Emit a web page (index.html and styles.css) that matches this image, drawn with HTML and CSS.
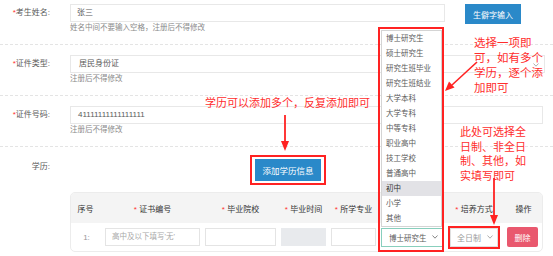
FILE: index.html
```html
<!DOCTYPE html>
<html lang="zh-CN">
<head>
<meta charset="utf-8">
<title>考生信息</title>
<link rel="stylesheet" href="styles.css">
</head>
<body>
<div class="page">
  <div class="row row-first">
    <div class="label"><span class="req">*</span>考生姓名:</div>
    <div class="field">
      <div class="input w-name">张三</div>
      <div class="hint">姓名中间不要输入空格，注册后不得修改</div>
    </div>
    <button class="btn btn-rare">生僻字输入</button>
  </div>
  <div class="sep"></div>
  <div class="row">
    <div class="label"><span class="req">*</span>证件类型:</div>
    <div class="field">
      <div class="input select w-type"><span class="pad2">居民身份证</span>
        <svg class="chev" width="6" height="4" viewBox="0 0 6 4"><polyline points="0.5,0.5 3,3.2 5.5,0.5" fill="none" stroke="#999" stroke-width="0.8"/></svg>
      </div>
      <div class="hint">注册后不得修改</div>
    </div>
  </div>
  <div class="sep"></div>
  <div class="row">
    <div class="label"><span class="req">*</span>证件号码:</div>
    <div class="field">
      <div class="input w-id"><span class="pad1">41111111111111111</span></div>
      <div class="hint">注册后不得修改</div>
    </div>
  </div>
  <div class="sep"></div>
  <div class="row row-edu">
    <div class="label label-edu">学历:</div>
    <div class="edu-body">
      <div class="add-wrap"><button class="btn btn-add">添加学历信息</button></div>
      <div class="table">
        <div class="thead">
          <div>序号</div>
          <div><span class="req">*</span> 证书编号</div>
          <div><span class="req">*</span> 毕业院校</div>
          <div><span class="req">*</span> 毕业时间</div>
          <div><span class="req">*</span> 所学专业</div>
          <div><span class="req">*</span> 学历</div>
          <div><span class="req">*</span> 培养方式</div>
          <div>操作</div>
        </div>
        <div class="trow">
          <div class="idx">1:</div>
          <div class="cell-input placeholder">高中及以下填写'无'</div>
          <div class="cell-input"></div>
          <div class="cell-input grey"></div>
          <div class="cell-input"></div>
          <div class="cell-select teal"><span>博士研究生</span>
            <svg width="6" height="4" viewBox="0 0 6 4"><polyline points="0.5,0.5 3,3.2 5.5,0.5" fill="none" stroke="#666" stroke-width="0.8"/></svg>
          </div>
          <div class="anno-box"><div class="cell-select muted"><span>全日制</span>
            <svg width="6" height="4" viewBox="0 0 6 4"><polyline points="0.5,0.5 3,3.2 5.5,0.5" fill="none" stroke="#999" stroke-width="0.8"/></svg>
          </div></div>
          <div class="op"><button class="btn btn-del">删除</button></div>
        </div>
      </div>
    </div>
  </div>
</div>

<div class="dd-frame"></div>
<ul class="dropdown">
  <li>博士研究生</li>
  <li>硕士研究生</li>
  <li>研究生班毕业</li>
  <li>研究生班结业</li>
  <li>大学本科</li>
  <li>大学专科</li>
  <li>中等专科</li>
  <li>职业高中</li>
  <li>技工学校</li>
  <li>普通高中</li>
  <li class="active">初中</li>
  <li>小学</li>
  <li>其他</li>
</ul>

<div class="note note-1">选择一项即<br>可，如有多个<br>学历，逐个添<br>加即可</div>
<div class="note note-2">学历可以添加多个，反复添加即可</div>
<div class="note note-3">此处可选择全<br>日制、非全日<br>制、其他，如<br>实填写即可</div>

<svg class="arrows" width="553" height="256" viewBox="0 0 553 256">
  <path d="M477,62 L452,85" stroke="#f22" stroke-width="1.6" fill="none"/>
  <polygon points="445,91 454.5,87.5 449,81.5" fill="#f22"/>
  <path d="M285,115 L285,143" stroke="#f22" stroke-width="1.8" fill="none"/>
  <polygon points="281,141 289,141 285,151" fill="#f22"/>
  <path d="M494,178 L494,217" stroke="#f22" stroke-width="1.8" fill="none"/>
  <polygon points="490,215 498,215 494,225" fill="#f22"/>
</svg>
</body>
</html>
```

FILE: styles.css
```css
* { box-sizing: border-box; }

body {
  margin: 0;
  width: 553px;
  height: 256px;
  overflow: hidden;
  position: relative;
  background: #fff;
  font-family: "Liberation Sans", "Noto Sans CJK SC", sans-serif;
  font-size: 8px;
  color: #5a5a5a;
}

.page { position: relative; }

.row {
  display: flex;
  align-items: flex-start;
  padding: 10px 0;
}

.row-first { padding-top: 4px; }

.label {
  width: 50px;
  margin-right: 20px;
  height: 18px;
  line-height: 18px;
  text-align: right;
  white-space: nowrap;
  color: #5a5a5a;
}

.req { color: #f33; }

.field { display: flex; flex-direction: column; }

.input {
  height: 18px;
  border: 1px solid #e8e8e8;
  line-height: 16px;
  padding-left: 6px;
  color: #5a5a5a;
  position: relative;
}

.w-name { width: 375px; }
.w-type { width: 475px; }
.w-id { width: 473px; }

.pad1 { padding-left: 1px; }
.pad2 { padding-left: 2px; }

.select .chev {
  position: absolute;
  right: 5px;
  top: 7px;
}

.hint {
  font-size: 7.5px;
  line-height: 12px;
  color: #8a8a8a;
}

.sep { border-top: 1px dashed #e4e4e4; }

.btn {
  border: none;
  color: #fff;
  font-family: "Liberation Sans", "Noto Sans CJK SC", sans-serif;
  font-size: 8px;
  padding: 0;
  cursor: pointer;
}

.btn-rare {
  margin-left: 20px;
  width: 56px;
  height: 20px;
  background: #2a89c9;
}

.row-edu { padding: 8px 0 0; }

.label-edu {
  height: 24px;
  line-height: 24px;
}

.edu-body { display: flex; flex-direction: column; }

.add-wrap {
  margin-left: 180px;
  width: 76px;
  border: 2px solid #f22;
  padding: 2px 3px;
}

.btn-add {
  width: 66px;
  height: 22px;
  background: #2a89c9;
  display: block;
  font-size: 8.5px;
}

.table {
  margin-top: 7px;
  width: 473px;
  border: 1px solid #ececec;
  border-radius: 5px;
  overflow: hidden;
}

.thead, .trow {
  display: grid;
  grid-template-columns: 29px 95px 71px 45px 45px 62px 52px 37px;
  column-gap: 5px;
  align-items: center;
}

.thead {
  height: 30px;
  background: #f4f4f4;
  text-align: center;
  color: #333;
}

.trow { height: 28px; }

.idx { text-align: center; color: #999; padding-left: 2px; }

.cell-input {
  height: 18px;
  border: 1px solid #e4e4e4;
  line-height: 16px;
  padding-left: 6px;
  color: #5a5a5a;
}

.placeholder { color: #a8a8a8; font-size: 7.5px; }

.cell-input.grey {
  background: #e8eaed;
  border-color: #e8eaed;
}

.cell-select {
  height: 19px;
  border: 1px solid #e0e0e0;
  display: flex;
  align-items: center;
  justify-content: space-between;
  padding: 0 4px 0 8px;
  color: #5a5a5a;
}

.cell-select.teal { border-color: #88cfbd; padding-left: 7px; font-size: 7.5px; }
.cell-select.muted { color: #9a9a9a; padding-left: 6px; }

.anno-box { border: 2px solid #f22; }

.op { display: flex; }

.btn-del {
  margin-left: 2px;
  width: 31px;
  height: 20px;
  background: #e9586e;
  border-radius: 2px;
}

.dd-frame {
  position: absolute;
  left: 378px;
  top: 27px;
  width: 66px;
  height: 225px;
  border: 2px solid #f22;
}

.dropdown {
  position: absolute;
  left: 381px;
  top: 30px;
  width: 61px;
  margin: 0;
  padding: 0;
  list-style: none;
  background: #fff;
  border: 1px solid #d4d4d4;
}

.dropdown li {
  height: 15px;
  line-height: 15px;
  padding-left: 4px;
  font-size: 7.5px;
  color: #5a5a5a;
  white-space: nowrap;
}

.dropdown li.active {
  background: #e2e2e6;
  color: #333;
}

.note {
  position: absolute;
  color: #ff2d2d;
  font-family: "Noto Sans CJK SC", sans-serif;
  white-space: nowrap;
}

.note-1 {
  left: 474px;
  top: 35px;
  font-size: 11.5px;
  line-height: 15px;
}

.note-2 {
  left: 205px;
  top: 95px;
  font-size: 11px;
  line-height: 15px;
}

.note-3 {
  left: 460px;
  top: 124px;
  font-size: 11px;
  line-height: 14.6px;
}

.arrows {
  position: absolute;
  left: 0;
  top: 0;
  pointer-events: none;
}
```
